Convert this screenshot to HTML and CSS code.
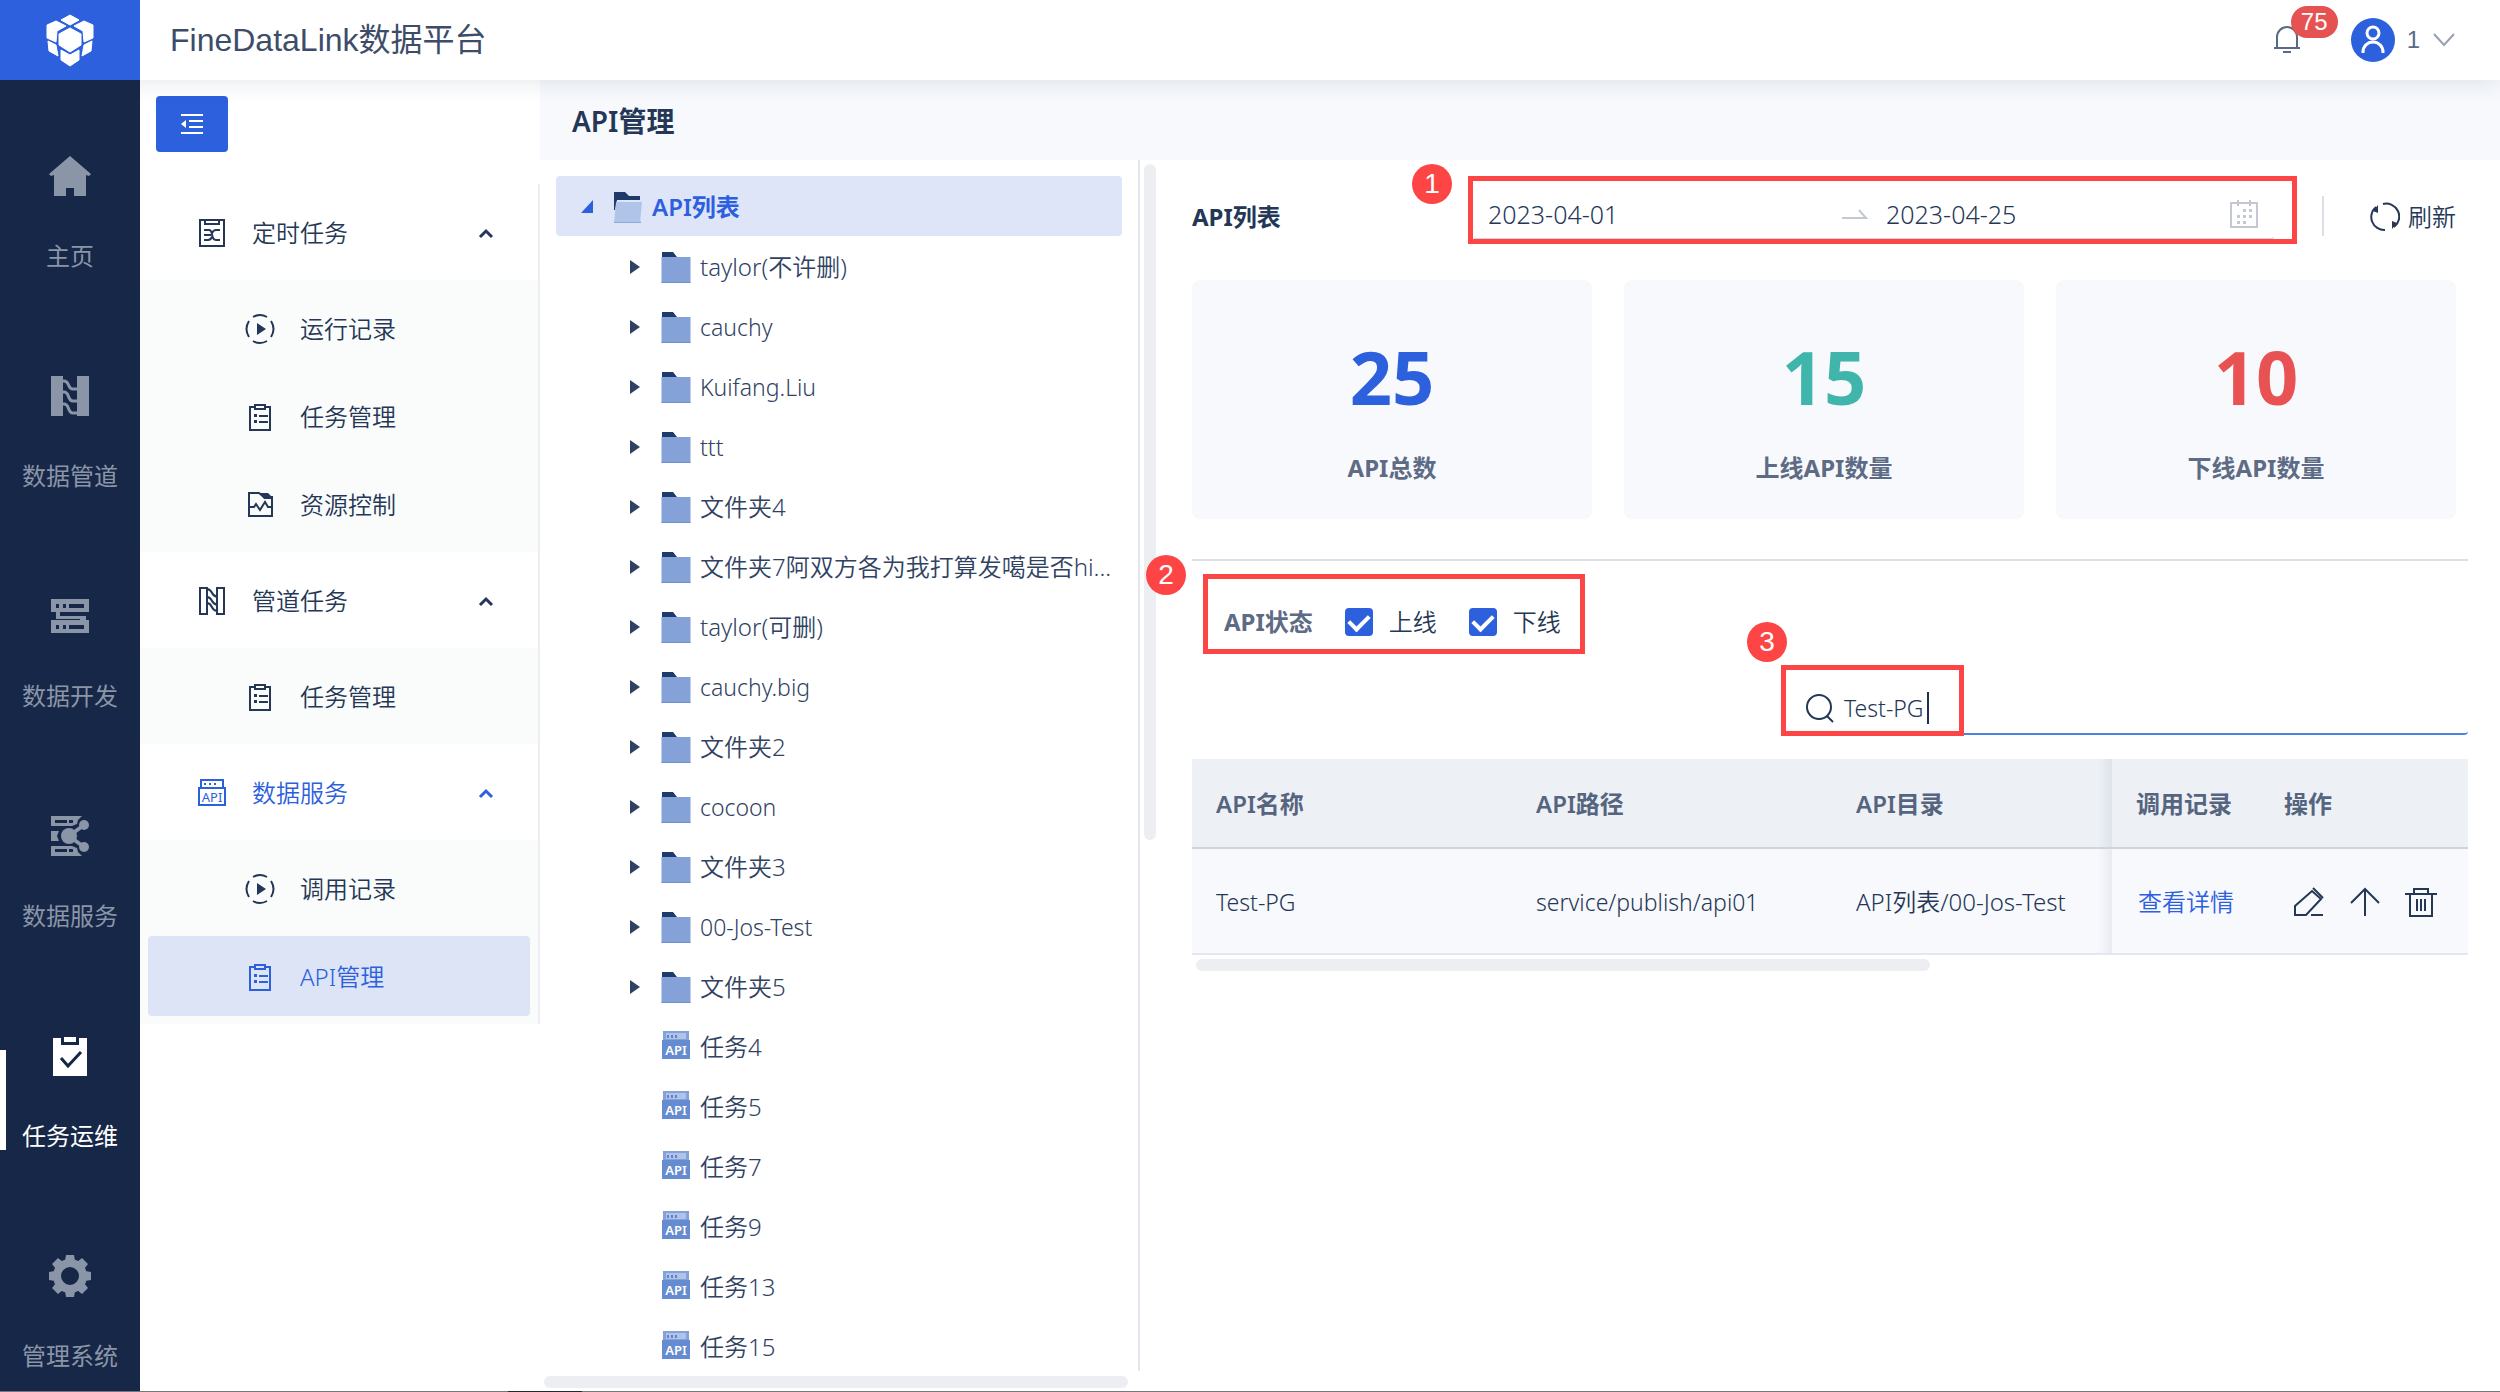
FILE: index.html
```html
<!DOCTYPE html>
<html lang="zh-CN">
<head>
<meta charset="utf-8">
<meta name="viewport" content="width=device-width, initial-scale=1">
<title>FineDataLink数据平台</title>
<link rel="stylesheet" href="styles.css">
</head>
<body>
<svg class="sprite" aria-hidden="true">
  <symbol id="i-folder" viewBox="0 0 30 34">
    <path d="M1 2h11l4 5v6H1z" fill="#1e3a6b"/>
    <path d="M0.500 7h29v26H0.500z" fill="#84a1d8"/>
    <path d="M0.500 32h29v1H0.500z" fill="#6d8fd0"/>
  </symbol>
  <symbol id="i-folder-open" viewBox="0 0 30 34">
    <path d="M1 2h11l4 4h11v4H4L2 20H1z" fill="#1e3a6b"/>
    <path d="M3 12h26l-2 21H1z" fill="#b0c4ea"/>
    <path d="M1 32h26l1-1v2H1z" fill="#8fa9dc"/>
  </symbol>
  <symbol id="i-api-file" viewBox="0 0 30 34">
    <path d="M2 1h26v10H2z" fill="#84a1d8"/>
    <path d="M5 3h20v6H5z" fill="#b0c4ea"/>
    <path d="M6 5h2v3H6zM10 5h2v3h-2zM14 5h2v3h-2z" fill="#5f83cf"/>
    <path d="M1 10h28v19H1z" fill="#658bd0"/>
  </symbol>
  <symbol id="i-clipboard" viewBox="0 0 32 32">
    <path d="M11 6H6v23h20V6h-5M11 4h10v4H11zM15 15h9M15 21h9" fill="none" stroke="currentColor" stroke-width="2"/>
    <path d="M10 13h3v3h-3zM10 19h3v3h-3z" fill="currentColor"/>
  </symbol>
  <symbol id="i-play" viewBox="0 0 32 32">
    <path d="M9 4a14 14 0 0 1 14 0M9 28a14 14 0 0 0 14 0M5 8a15 15 0 0 0 0 16M27 8a15 15 0 0 1 0 16" fill="none" stroke="currentColor" stroke-width="2"/>
    <path d="M13 10l9 6-9 6z" fill="currentColor"/>
  </symbol>
</svg>

<header class="topbar">
  <a class="logo" href="#" aria-label="FineDataLink">
    <svg width="50" height="58" viewBox="0 0 50 58" fill="#fff" stroke="#fff" stroke-width="1" stroke-linejoin="round">
      <path d="M25 4l9 5-9 5-9-5z"/>
      <path d="M11 10l10 5-9 5-1 11-9-4V14zM39 10l-10 5 9 5 1 11 9-4V14z"/>
      <path d="M25 17l11 6v11l-11 7-11-7V23z"/>
      <path d="M3 30l8 4 2 11-9-5zM47 30l-8 4-2 11 9-5z"/>
      <path d="M16 39l9 5 9-5v10l-9 6-9-6z"/>
    </svg>
  </a>
  <h1 class="product">FineDataLink数据平台</h1>
  <div class="account">
    <button class="bell" type="button" aria-label="消息">
      <svg width="28" height="32" viewBox="0 0 28 32" fill="none" stroke="#5a6a84" stroke-width="2">
        <path d="M4 24V13a10 10 0 0 1 20 0v11M1 24h26M10 28h8"/>
      </svg>
      <span class="bell-count">75</span>
    </button>
    <button class="user" type="button">
      <svg width="44" height="44" viewBox="0 0 44 44">
        <circle cx="22" cy="22" r="22" fill="#2c60dd"/>
        <g fill="none" stroke="#fff" stroke-width="3"><circle cx="22" cy="15" r="6"/><path d="M12 35v-1a10 10 0 0 1 20 0v1"/></g>
      </svg>
      <span>1</span>
      <svg width="24" height="16" viewBox="0 0 24 16" fill="none" stroke="#97a1b3" stroke-width="2"><path d="M2 2l10 11L22 2"/></svg>
    </button>
  </div>
</header>

<div class="shell">
  <nav class="rail" aria-label="主导航">
    <a href="#"><svg viewBox="0 0 44 44"><path d="M22 2l21 18-2 2-3-1v21H26v-8h-8v8H6V21l-3 1-2-2z" fill="currentColor"/></svg>主页</a>
    <a href="#"><svg viewBox="0 0 44 44"><path d="M3 2h12v40H3zM29 2h12v40H29z" fill="currentColor"/><path d="M14 7h2c6 0 3 8 9 8h5M14 18h2c6 0 3 9 9 9h5M14 30h2c6 0 3 9 9 9h5" fill="none" stroke="currentColor" stroke-width="3"/></svg>数据管道</a>
    <a href="#"><svg viewBox="0 0 44 44"><path fill="currentColor" fill-rule="evenodd" d="M3 5h38v13H12v4h26v4h3v13H3V26h29v-1H8v-7H3zM8 10v4h3v-4zm7 0v4h3v-4zm6 0v4h15v-4zM8 31v4h3v-4zm7 0v4h3v-4zm6 0v4h15v-4z"/></svg>数据开发</a>
    <a href="#"><svg viewBox="0 0 44 44"><path fill="currentColor" fill-rule="evenodd" d="M3 2h31l-4 4-1 4-5 2H3zm4 4v3h12V6zm14 0v3h4V6zM3 17h8l-2 5 2 5H3zM3 32h21l5 2 1 4 4 4H3zm4 3v3h12v-3zm14 0v3h4v-3z"/><circle cx="21" cy="22" r="8" fill="currentColor"/><circle cx="36" cy="11" r="5" fill="currentColor"/><circle cx="36" cy="33" r="5" fill="currentColor"/><path d="M21 22l15-11M21 22l15 11" stroke="currentColor" stroke-width="4"/></svg>数据服务</a>
    <a href="#" class="current" aria-current="page"><svg viewBox="0 0 44 44"><path fill="currentColor" fill-rule="evenodd" d="M5 4h8v7h18V4h8v38H5z"/><path d="M16 3h12v5H16z" fill="currentColor"/><path d="M13 24l7 8 13-14" fill="none" stroke="#162747" stroke-width="3"/></svg>任务运维</a>
    <a href="#"><svg viewBox="0 0 44 44"><circle cx="22" cy="22" r="13" fill="none" stroke="currentColor" stroke-width="8"/><path d="M18 1h8l1 6H17zM18 43h8l1-6H17zM1 18v8l6 1V17zM43 18v8l-6 1V17zM10 4l-6 6 4 5 7-7zM34 4l6 6-4 5-7-7zM10 40l-6-6 4-5 7 7zM34 40l6-6-4-5-7 7z" fill="currentColor"/></svg>管理系统</a>
  </nav>

  <aside class="side">
    <button class="collapse" type="button" aria-label="收起菜单">
      <svg width="24" height="24" viewBox="0 0 24 24" fill="none" stroke="#fff" stroke-width="2"><path d="M1 3h22M9 9h14M9 15h14M1 21h22"/><path d="M1 12l5-4v8z" fill="#fff" stroke="none"/></svg>
    </button>
    <nav class="menu" aria-label="任务运维">
      <button class="group" type="button" aria-expanded="true">
        <svg class="ico" viewBox="0 0 32 32" fill="none" stroke="currentColor" stroke-width="2"><path d="M4 3h24v26H4zM9 3v4h14V3M8 13h5c5 0 1 10 7 10h4M8 18h7M8 23h4c2 0 3-1 4-3M24 13h-4c-2 0-3 1-4 3"/></svg>
        <span>定时任务</span>
        <svg class="chev" viewBox="0 0 16 12"><path d="M2 10l6-6 6 6"/></svg>
      </button>
      <div class="subs">
        <a href="#"><svg class="ico"><use href="#i-play"/></svg>运行记录</a>
        <a href="#"><svg class="ico"><use href="#i-clipboard"/></svg>任务管理</a>
        <a href="#"><svg class="ico" viewBox="0 0 32 32" fill="none" stroke="currentColor" stroke-width="2"><path d="M5 4h10l5 4h8v19H5zM5 18h5l2-3 4 6 5-8 3 5h4"/><path d="M15 4h9l4 4v2h-8z" fill="currentColor" stroke="none"/></svg>资源控制</a>
      </div>
      <button class="group" type="button" aria-expanded="true">
        <svg class="ico" viewBox="0 0 32 32" fill="none" stroke="currentColor" stroke-width="2"><path d="M4 3h7v26H4zM21 3h7v26h-7zM11 4c6 0 3 6 10 8M11 12c6 0 3 6 10 8M11 18c6 0 3 7 10 8"/></svg>
        <span>管道任务</span>
        <svg class="chev" viewBox="0 0 16 12"><path d="M2 10l6-6 6 6"/></svg>
      </button>
      <div class="subs">
        <a href="#"><svg class="ico"><use href="#i-clipboard"/></svg>任务管理</a>
      </div>
      <button class="group active" type="button" aria-expanded="true">
        <svg class="ico" viewBox="0 0 32 32" fill="none" stroke="currentColor" stroke-width="2"><path d="M5 11V3h22v8M3 11h26v17H3z"/><path d="M8 7h2M13 7h2M18 7h2"/><text x="16" y="25" text-anchor="middle" font-size="13" font-weight="400" fill="currentColor" stroke="none">API</text></svg>
        <span>数据服务</span>
        <svg class="chev" viewBox="0 0 16 12"><path d="M2 10l6-6 6 6"/></svg>
      </button>
      <div class="subs">
        <a href="#"><svg class="ico"><use href="#i-play"/></svg>调用记录</a>
        <a href="#" class="active" aria-current="page"><svg class="ico"><use href="#i-clipboard"/></svg>API管理</a>
      </div>
    </nav>
  </aside>

  <main class="page">
    <h2 class="page-title">API管理</h2>
    <div class="columns">
      <section class="tree-pane" aria-label="API目录">
        <ul class="tree">
          <li class="root"><svg class="arrow" viewBox="0 0 14 16"><path d="M13 1v13H1z" fill="currentColor"/></svg><svg class="node"><use href="#i-folder-open"/></svg><span>API列表</span></li>
          <li><svg class="arrow" viewBox="0 0 14 16"><path d="M2 1l10 7-10 7z" fill="currentColor"/></svg><svg class="node"><use href="#i-folder"/></svg><span>taylor(不许删)</span></li>
          <li><svg class="arrow" viewBox="0 0 14 16"><path d="M2 1l10 7-10 7z" fill="currentColor"/></svg><svg class="node"><use href="#i-folder"/></svg><span class="latin">cauchy</span></li>
          <li><svg class="arrow" viewBox="0 0 14 16"><path d="M2 1l10 7-10 7z" fill="currentColor"/></svg><svg class="node"><use href="#i-folder"/></svg><span class="latin">Kuifang.Liu</span></li>
          <li><svg class="arrow" viewBox="0 0 14 16"><path d="M2 1l10 7-10 7z" fill="currentColor"/></svg><svg class="node"><use href="#i-folder"/></svg><span class="latin">ttt</span></li>
          <li><svg class="arrow" viewBox="0 0 14 16"><path d="M2 1l10 7-10 7z" fill="currentColor"/></svg><svg class="node"><use href="#i-folder"/></svg><span>文件夹4</span></li>
          <li><svg class="arrow" viewBox="0 0 14 16"><path d="M2 1l10 7-10 7z" fill="currentColor"/></svg><svg class="node"><use href="#i-folder"/></svg><span>文件夹7阿双方各为我打算发噶是否hi...</span></li>
          <li><svg class="arrow" viewBox="0 0 14 16"><path d="M2 1l10 7-10 7z" fill="currentColor"/></svg><svg class="node"><use href="#i-folder"/></svg><span>taylor(可删)</span></li>
          <li><svg class="arrow" viewBox="0 0 14 16"><path d="M2 1l10 7-10 7z" fill="currentColor"/></svg><svg class="node"><use href="#i-folder"/></svg><span class="latin">cauchy.big</span></li>
          <li><svg class="arrow" viewBox="0 0 14 16"><path d="M2 1l10 7-10 7z" fill="currentColor"/></svg><svg class="node"><use href="#i-folder"/></svg><span>文件夹2</span></li>
          <li><svg class="arrow" viewBox="0 0 14 16"><path d="M2 1l10 7-10 7z" fill="currentColor"/></svg><svg class="node"><use href="#i-folder"/></svg><span class="latin">cocoon</span></li>
          <li><svg class="arrow" viewBox="0 0 14 16"><path d="M2 1l10 7-10 7z" fill="currentColor"/></svg><svg class="node"><use href="#i-folder"/></svg><span>文件夹3</span></li>
          <li><svg class="arrow" viewBox="0 0 14 16"><path d="M2 1l10 7-10 7z" fill="currentColor"/></svg><svg class="node"><use href="#i-folder"/></svg><span class="latin">00-Jos-Test</span></li>
          <li><svg class="arrow" viewBox="0 0 14 16"><path d="M2 1l10 7-10 7z" fill="currentColor"/></svg><svg class="node"><use href="#i-folder"/></svg><span>文件夹5</span></li>
          <li class="leaf"><svg class="node"><use href="#i-api-file"/><text x="15" y="25">API</text></svg><span>任务4</span></li>
          <li class="leaf"><svg class="node"><use href="#i-api-file"/><text x="15" y="25">API</text></svg><span>任务5</span></li>
          <li class="leaf"><svg class="node"><use href="#i-api-file"/><text x="15" y="25">API</text></svg><span>任务7</span></li>
          <li class="leaf"><svg class="node"><use href="#i-api-file"/><text x="15" y="25">API</text></svg><span>任务9</span></li>
          <li class="leaf"><svg class="node"><use href="#i-api-file"/><text x="15" y="25">API</text></svg><span>任务13</span></li>
          <li class="leaf"><svg class="node"><use href="#i-api-file"/><text x="15" y="25">API</text></svg><span>任务15</span></li>
        </ul>
        <div class="scroll-x tree-scroll"></div>
      </section>
      <div class="split"></div>
      <div class="scroll-y"></div>

      <section class="detail">
        <div class="toolbar">
          <h3>API列表</h3>
          <div class="range">
            <input class="from" type="text" value="2023-04-01" aria-label="开始日期">
            <svg width="26" height="14" viewBox="0 0 26 14" fill="none" stroke="#c3c8d1" stroke-width="2"><path d="M0 11h24l-7-8"/></svg>
            <input class="to" type="text" value="2023-04-25" aria-label="结束日期">
            <svg width="30" height="30" viewBox="0 0 30 30"><path d="M2 4h26v24H2zM9 1v6M21 1v6" fill="none" stroke="#c3c8d1" stroke-width="2"/><path d="M14 10h3v3h-3zM20 10h3v3h-3zM8 16h3v3H8zM14 16h3v3h-3zM20 16h3v3h-3zM8 22h3v3H8zM14 22h3v3h-3z" fill="#c3c8d1"/></svg>
            <span class="mark"></span><span class="step">1</span>
          </div>
          <button class="refresh" type="button">
            <svg width="30" height="30" viewBox="0 0 30 30"><path d="M15 28A13 13 0 0 1 6 5M13 2A13 13 0 0 1 24 25" fill="none" stroke="currentColor" stroke-width="2"/><path d="M3 9l5-6v8zM27 21l-5 6v-8z" fill="currentColor"/></svg>刷新
          </button>
        </div>

        <div class="cards">
          <div class="card"><strong class="blue">25</strong><span>API总数</span></div>
          <div class="card"><strong class="teal">15</strong><span>上线API数量</span></div>
          <div class="card"><strong class="red">10</strong><span>下线API数量</span></div>
        </div>

        <div class="filters">
          <fieldset class="status">
            <legend>API状态</legend>
            <label><input type="checkbox" checked>上线</label>
            <label><input type="checkbox" checked>下线</label>
            <span class="mark"></span><span class="step">2</span>
          </fieldset>
        </div>

        <div class="search">
          <svg width="30" height="30" viewBox="0 0 30 30" fill="none" stroke="currentColor" stroke-width="2"><circle cx="14" cy="14" r="12"/><path d="M22 23l6 6"/></svg>
          <input type="text" value="Test-PG" aria-label="搜索API"><i class="caret"></i>
          <span class="mark"></span><span class="step">3</span>
        </div>

        <table class="grid">
          <colgroup><col class="w-name"><col class="w-path"><col><col class="w-log"><col class="w-ops"></colgroup>
          <thead><tr><th>API名称</th><th>API路径</th><th class="edge">API目录</th><th>调用记录</th><th>操作</th></tr></thead>
          <tbody><tr>
            <td>Test-PG</td><td>service/publish/api01</td><td class="edge">API列表/00-Jos-Test</td>
            <td class="log"><a href="#">查看详情</a></td>
            <td class="ops"><div>
              <button type="button" aria-label="编辑"><svg viewBox="0 0 32 32"><path d="M2 29v-9L19 5l9 8-15 16zM20 2l10 10M18 29h12"/></svg></button>
              <button type="button" aria-label="上线"><svg viewBox="0 0 32 32"><path d="M16 30V3M2 17L16 3l14 14"/></svg></button>
              <button type="button" aria-label="删除"><svg viewBox="0 0 32 32"><path d="M0 8h32M9 8V3h14v5M5 8v22h22V8M12 13v12M16 13v12M20 13v12"/></svg></button>
            </div></td>
          </tr></tbody>
        </table>
        <div class="scroll-x grid-scroll"></div>
      </section>
    </div>
  </main>
</div>
<div class="bottom-edge"></div>
</body>
</html>
```

FILE: styles.css
```css
* { box-sizing: border-box; }

body {
  margin: 0;
  min-height: 100vh;
  display: flex;
  flex-direction: column;
  background: #fff;
  color: #243756;
  font: 350 24px/36px "Noto Sans", "Noto Sans CJK SC", sans-serif;
}

h1, h2, h3, ul, fieldset { margin: 0; padding: 0; }
button, input { font: inherit; color: inherit; background: none; border: 0; padding: 0; }
a { color: inherit; text-decoration: none; }
svg { flex: none; display: block; }
.sprite { position: absolute; width: 0; height: 0; }

/* top bar */
.topbar {
  position: relative;
  z-index: 1;
  display: flex;
  align-items: center;
  height: 80px;
  background: #fff;
  box-shadow: 0 4px 20px rgba(30, 45, 80, 0.1);
}
.logo {
  display: grid;
  place-items: center;
  width: 140px;
  height: 80px;
  background: #2c60dd;
}
.product {
  flex: 1;
  padding-left: 30px;
  font: 400 32px/40px "Liberation Sans", "Noto Sans CJK SC", sans-serif;
  color: #3d4d69;
}
.account { display: flex; align-items: center; gap: 50px; padding-right: 44px; }
.bell { position: relative; }
.bell-count {
  position: absolute;
  left: 18px;
  top: -18px;
  width: 47px;
  height: 32px;
  border-radius: 16px;
  background: #e65251;
  color: #fff;
  font: 24px/32px "Liberation Sans", sans-serif;
}
.user {
  display: flex;
  align-items: center;
  gap: 12px;
  font-family: "Liberation Sans", sans-serif;
  color: #5a6a84;
}

/* dark rail */
.shell { flex: 1; display: flex; }
.rail {
  position: relative;
  z-index: 2;
  flex: none;
  width: 140px;
  display: flex;
  flex-direction: column;
  gap: 100px;
  padding-top: 74px;
  background: #162747;
  color: #8b95a8;
  font-weight: 400;
}
.rail a {
  position: relative;
  display: flex;
  flex-direction: column;
  align-items: center;
  gap: 40px;
}
.rail svg { width: 44px; height: 44px; }
.rail .current { color: #fff; }
.rail .current::before {
  content: "";
  position: absolute;
  left: 0;
  top: 16px;
  width: 6px;
  height: 100px;
  background: #fff;
}

/* side menu */
.side { flex: none; width: 400px; padding-top: 16px; }
.collapse {
  display: grid;
  place-items: center;
  width: 72px;
  height: 56px;
  margin: 0 16px 32px;
  border-radius: 4px;
  background: #2c60dd;
}
.menu { border-right: 2px solid #edeef2; }
.ico { width: 32px; height: 32px; }
.group {
  display: flex;
  align-items: center;
  width: 100%;
  height: 96px;
  padding: 2px 44px 0 56px;
  gap: 24px;
  text-align: left;
}
.group span { flex: 1; }
.chev { width: 16px; height: 12px; fill: none; stroke: currentColor; stroke-width: 3; }
.subs {
  display: flex;
  flex-direction: column;
  gap: 8px;
  padding: 8px;
  background: #fafbfb;
}
.subs a {
  display: flex;
  align-items: center;
  gap: 24px;
  height: 80px;
  padding: 2px 0 0 96px;
  border-radius: 4px;
}
.active { color: #2c60dd; }
.subs .active { background: #dce4f6; }

/* page */
.page { flex: 1; min-width: 0; display: flex; flex-direction: column; }
.page-title {
  height: 80px;
  padding-left: 32px;
  background: #f7f9fd;
  font-size: 28px;
  font-weight: 600;
  line-height: 82px;
}
.columns { flex: 1; display: flex; }
.tree-pane { flex: none; width: 598px; padding: 16px 16px 0; }
.tree { list-style: none; color: #2f4263; }
.tree li { display: flex; align-items: center; height: 60px; padding: 2px 0 0 72px; }
.tree .arrow { width: 14px; height: 16px; margin-right: 19px; }
.tree .node { width: 30px; height: 34px; margin-right: 9px; }
.node text { font-size: 13px; font-weight: 600; fill: #fff; text-anchor: middle; }
.tree span { white-space: nowrap; }
.tree .leaf { padding-left: 105px; }
.tree .root {
  padding-left: 24px;
  border-radius: 4px;
  background: #dfe5f9;
  color: #2c60dd;
  font-weight: 600;
}
.latin, .grid td, .search { font-size: 23px; }
.scroll-x { height: 12px; border-radius: 6px; background: #edeef2; }
.tree-scroll { margin: 0 -6px 0 -12px; }
.split { width: 2px; margin-bottom: 20px; background: #e4e6ed; }
.scroll-y { flex: none; width: 12px; height: 676px; margin: 4px 0 0 4px; border-radius: 6px; background: #edeef2; }

/* detail */
.detail { flex: 1; min-width: 0; padding: 32px 32px 0 36px; }
.toolbar { display: flex; align-items: center; margin-right: 12px; }
.toolbar h3 { flex: 1; padding-top: 2px; font-size: 24px; font-weight: 700; }
.range {
  position: relative;
  display: flex;
  align-items: center;
  width: 800px;
  height: 48px;
  padding: 0 15px 2px 14px;
  border-bottom: 2px solid #ced3dc;
  border-radius: 4px;
  font-size: 25px;
}
.range input { min-width: 0; }
.from { width: 354px; }
.to { flex: 1; margin-left: 18px; }
.refresh {
  display: flex;
  align-items: center;
  gap: 8px;
  height: 40px;
  margin-left: 48px;
  padding: 2px 0 0 46px;
  border-left: 2px solid #dbdfe6;
}
.cards {
  display: grid;
  grid-template-columns: repeat(3, 1fr);
  gap: 32px;
  margin: 40px 12px 40px 0;
}
.card {
  display: flex;
  flex-direction: column;
  align-items: center;
  gap: 32px;
  padding: 56px 0 33px;
  border-radius: 8px;
  background: #f8f9fd;
  color: #5d6b85;
  font-weight: 700;
}
.card strong { font-size: 74px; font-weight: 700; line-height: 82px; }
.blue { color: #2c60dd; }
.teal { color: #3fb5ac; }
.red { color: #e85252; }

.filters { padding: 43px 0 0 32px; border-top: 2px solid #dbdfe9; }
.status {
  position: relative;
  display: inline-flex;
  align-items: center;
  gap: 32px;
  border: 0;
  vertical-align: top;
}
.status legend { float: left; padding: 0; color: #5d6b85; font-weight: 700; }
.status label { display: flex; align-items: center; gap: 16px; }
.status input {
  appearance: none;
  width: 28px;
  height: 28px;
  margin: 0;
  border-radius: 4px;
  background: #2c60dd;
  display: grid;
  place-items: center;
}
.status input::before {
  content: "";
  width: 16px;
  height: 9px;
  border: solid #fff;
  border-width: 0 0 4px 4px;
  transform: translateY(-2px) rotate(-45deg);
}

.search {
  position: relative;
  display: flex;
  align-items: center;
  width: 680px;
  height: 56px;
  margin: 39px 0 24px auto;
  padding: 4px 0 0 17px;
  border-bottom: 2px solid #4f80e5;
  border-radius: 4px;
}
.search input { width: 83px; margin-left: 9px; }
.caret { width: 2px; height: 32px; background: #1f3050; }

/* numbered call-outs */
.mark, .step { position: absolute; pointer-events: none; }
.mark { border: 5px solid #fe4545; }
.step {
  width: 40px;
  height: 40px;
  border-radius: 50%;
  background: #fe4545;
  color: #fff;
  font: 28px/40px "Liberation Sans", sans-serif;
  text-align: center;
}
.range .mark { inset: -16px -23px -6px -6px; }
.range .step { left: -62px; top: -28px; }
.status .mark { inset: -30px -24px -14px -21px; }
.status .step { left: -78px; top: -49px; }
.search .mark { left: -7px; top: -14px; width: 183px; height: 71px; }
.search .step { left: -41px; top: -57px; }

/* table */
.grid { width: 100%; table-layout: fixed; border-collapse: separate; border-spacing: 0; }
.w-name, .w-path { width: 320px; }
.w-log { width: 148px; }
.w-ops { width: 208px; }
.grid th, .grid td { padding: 2px 0 0 24px; text-align: left; white-space: nowrap; }
.grid th {
  height: 90px;
  border-bottom: 2px solid #ced3de;
  background: #edf1f6;
  color: #56657f;
  font-weight: 600;
}
.grid td { height: 106px; border-bottom: 2px solid #e4e7ef; background: #f8f9fd; }
.grid .edge {
  font-size: 24px;
  background-image: linear-gradient(to right, transparent, rgba(30, 45, 80, 0.07));
  background-repeat: no-repeat;
  background-position: right;
  background-size: 14px 100%;
}
.grid .log { padding-left: 26px; font-size: 24px; color: #2c60dd; }
.ops div { display: flex; gap: 24px; padding-left: 9px; }
.ops svg { width: 32px; height: 32px; fill: none; stroke: currentColor; stroke-width: 2; }
.grid-scroll { width: 734px; margin: 4px 0 0 4px; }

.bottom-edge { height: 1px; background: linear-gradient(to right, #777 508px, #26282c 508px 582px, #777 582px); }
```
